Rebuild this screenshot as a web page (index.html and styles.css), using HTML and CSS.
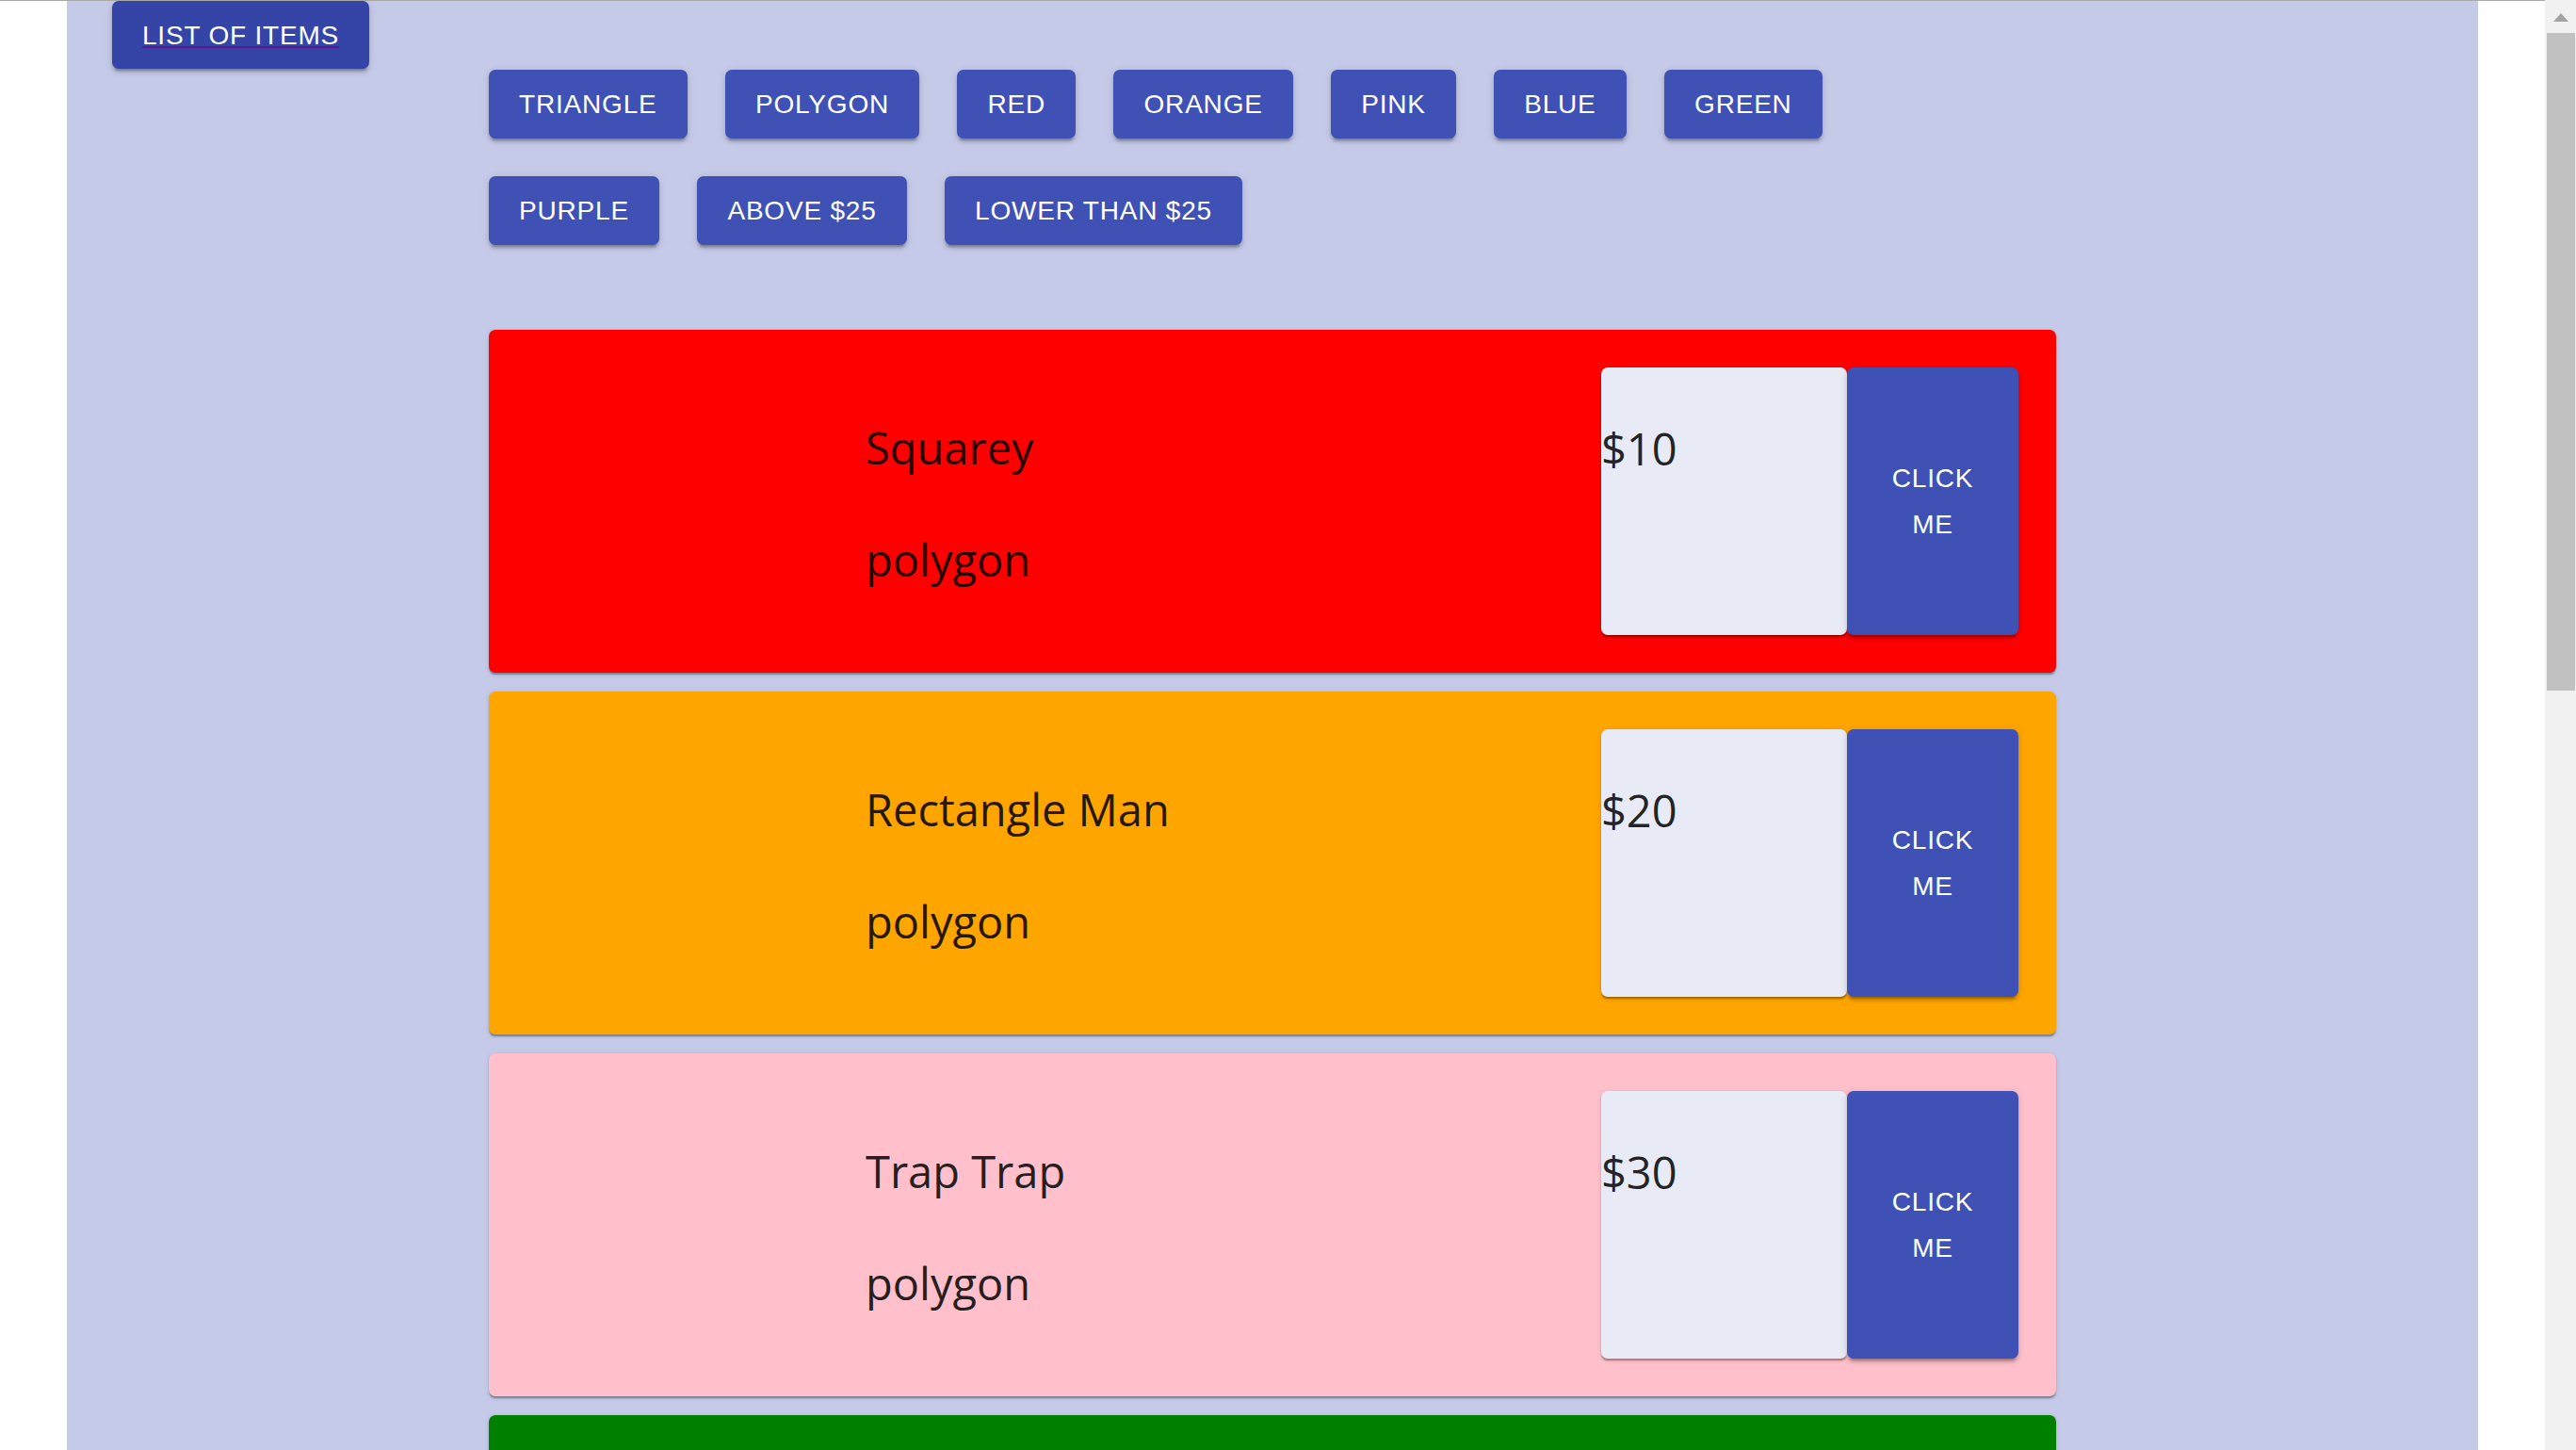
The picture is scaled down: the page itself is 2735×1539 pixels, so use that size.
FILE: index.html
```html
<!DOCTYPE html>
<html lang="en">
<head>
<meta charset="utf-8">
<title>List of items</title>
<link rel="stylesheet" href="styles.css">
</head>
<body>
<div class="window">
  <div class="viewport">
    <div class="app">
      <div class="header">
        <button class="btn btn-dark"><a class="link" href="#">List of items</a></button>
      </div>
      <div class="filters">
        <div class="filter-row">
          <button class="btn">Triangle</button>
          <button class="btn">Polygon</button>
          <button class="btn">Red</button>
          <button class="btn">Orange</button>
          <button class="btn">Pink</button>
          <button class="btn">Blue</button>
          <button class="btn">Green</button>
        </div>
        <div class="filter-row">
          <button class="btn">Purple</button>
          <button class="btn">Above $25</button>
          <button class="btn">Lower than $25</button>
        </div>
      </div>
      <div class="cards">
        <div class="card card-red">
          <div class="info">
            <div class="name">Squarey</div>
            <div class="type">polygon</div>
          </div>
          <div class="price">$10</div>
          <button class="btn buy">Click me</button>
        </div>
        <div class="card card-orange">
          <div class="info">
            <div class="name">Rectangle Man</div>
            <div class="type">polygon</div>
          </div>
          <div class="price">$20</div>
          <button class="btn buy">Click me</button>
        </div>
        <div class="card card-pink">
          <div class="info">
            <div class="name">Trap Trap</div>
            <div class="type">polygon</div>
          </div>
          <div class="price">$30</div>
          <button class="btn buy">Click me</button>
        </div>
        <div class="card card-green">
          <div class="info"></div>
          <div class="price"></div>
          <button class="btn buy"></button>
        </div>
      </div>
    </div>
  </div>
  <div class="scrollbar">
    <div class="sb-arrow"></div>
    <div class="sb-thumb"></div>
  </div>
</div>
</body>
</html>
```

FILE: styles.css
```css
html, body {
  margin: 0;
  padding: 0;
  height: 100%;
  overflow: hidden;
  background: #ffffff;
}

.window {
  display: flex;
  height: 1539px;
}

.viewport {
  flex: 1;
  border-top: 1px solid #a8a8a8;
  padding: 0 71px;
  overflow: hidden;
  background: #ffffff;
}

.app {
  background: #c5cae9;
  height: 100%;
  overflow: hidden;
}

.header {
  display: flex;
  padding-left: 48px;
}

.btn {
  font-family: "Liberation Sans", Arial, sans-serif;
  font-size: 28px;
  font-weight: 400;
  letter-spacing: 0.8px;
  line-height: 49px;
  text-transform: uppercase;
  color: #ffffff;
  background: #3f51b5;
  border: 0;
  border-radius: 7px;
  height: 72.7px;
  padding: 0 32.1px;
  display: inline-flex;
  align-items: center;
  justify-content: center;
  box-sizing: border-box;
  box-shadow: 0 5px 2px -3.5px rgba(0, 0, 0, 0.2),
              0 3.5px 3.5px 0 rgba(0, 0, 0, 0.14),
              0 1.75px 9px 0 rgba(0, 0, 0, 0.12);
  cursor: pointer;
}

.btn-dark {
  background: #3445a7;
  height: 72.3px;
  padding: 0 32px;
}

.link {
  color: #ffffff;
  text-decoration: underline;
  text-decoration-color: #5a1a8f;
}

.filters {
  display: flex;
  flex-direction: column;
  gap: 40.3px;
  margin-top: 1px;
  padding-left: 448px;
}

.filter-row {
  display: flex;
  gap: 40.3px;
}

.cards {
  display: flex;
  flex-direction: column;
  gap: 20.6px;
  margin-top: 90.3px;
  padding: 0 448px;
}

.card {
  display: flex;
  height: 363.4px;
  box-sizing: border-box;
  padding: 40px 40px 40px 400px;
  border-radius: 7px;
  box-shadow: 0 3.5px 1.75px -1.75px rgba(0, 0, 0, 0.2),
              0 1.75px 1.75px 0 rgba(0, 0, 0, 0.14),
              0 1.75px 5px 0 rgba(0, 0, 0, 0.12);
  flex-shrink: 0;
}

.card-red { background: #ff0000; }
.card-orange { background: #ffa500; }
.card-pink { background: #ffc0cb; }
.card-green { background: #008000; }

.info {
  flex: 1;
  padding-top: 52.8px;
  font-family: "Open Sans", "Noto Sans", sans-serif;
  font-size: 47px;
  line-height: 64px;
  color: rgba(0, 0, 0, 0.87);
}

.name {
  margin-bottom: 55px;
  white-space: nowrap;
}

.price {
  width: 261px;
  box-sizing: border-box;
  padding-top: 53.8px;
  background: #e8eaf6;
  border-radius: 7px;
  font-family: "Open Sans", "Noto Sans", sans-serif;
  font-size: 47px;
  line-height: 64px;
  color: rgba(0, 0, 0, 0.87);
  box-shadow: 0 3.5px 1.75px -1.75px rgba(0, 0, 0, 0.2),
              0 1.75px 1.75px 0 rgba(0, 0, 0, 0.14),
              0 1.75px 5px 0 rgba(0, 0, 0, 0.12);
}

.buy {
  width: 182px;
  height: auto;
  padding: 0 28px;
  text-align: center;
}

.scrollbar {
  width: 33px;
  background: #f1f1f1;
  display: flex;
  flex-direction: column;
  align-items: center;
}

.sb-arrow {
  width: 0;
  height: 0;
  border-left: 8px solid transparent;
  border-right: 8px solid transparent;
  border-bottom: 9px solid #a3a3a3;
  margin-top: 14px;
  margin-bottom: 12px;
}

.sb-thumb {
  align-self: flex-end;
  margin-right: 1px;
  width: 30px;
  height: 698px;
  background: #c1c1c1;
}
```
